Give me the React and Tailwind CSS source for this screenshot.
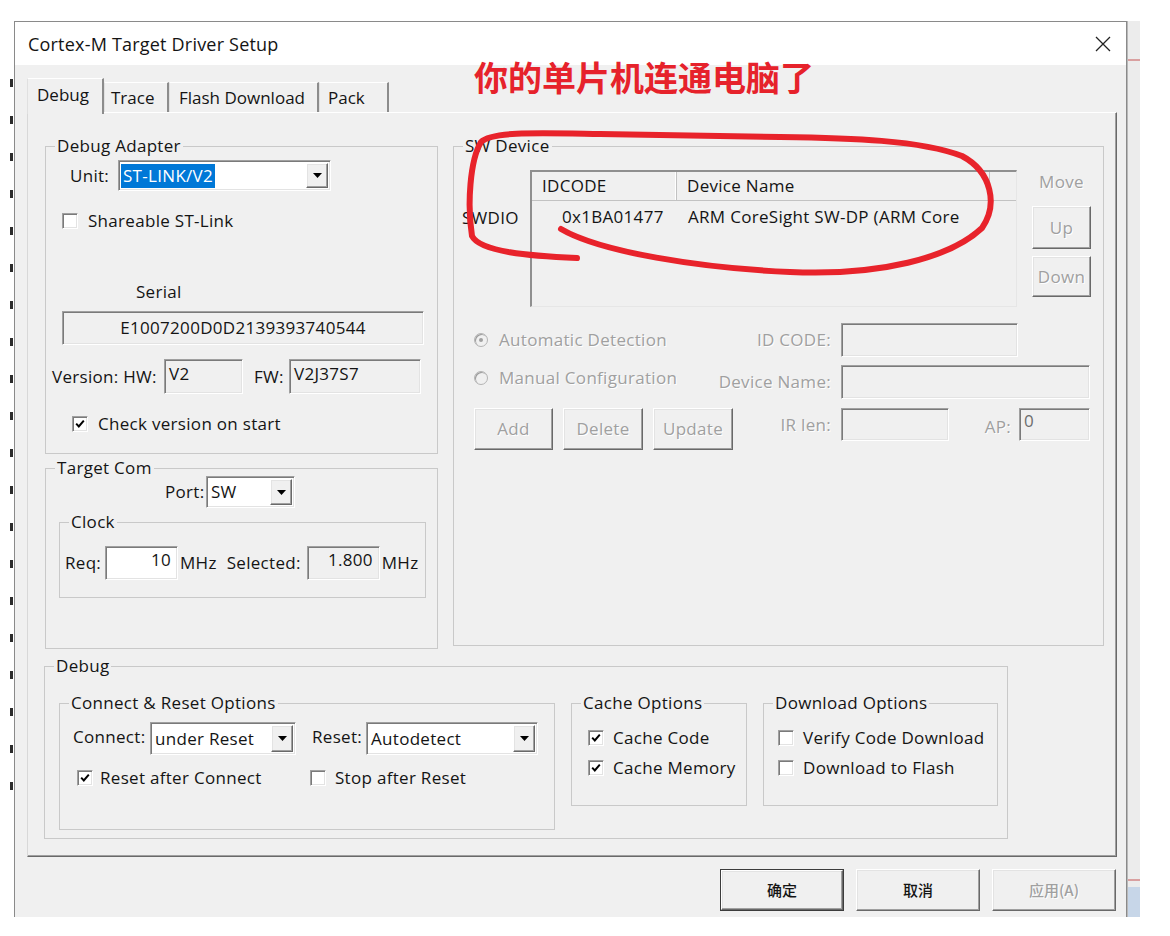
import React from 'react';

const sunken =
  'border border-t-[#a0a0a0] border-l-[#a0a0a0] border-r-white border-b-white shadow-[inset_1px_1px_0_#7a7a7a,inset_-1px_-1px_0_#e3e3e3]';
const raised =
  'border border-t-white border-l-white border-r-[#696969] border-b-[#696969] shadow-[inset_-1px_-1px_0_#a0a0a0,inset_1px_1px_0_#e3e3e3]';
const dis = 'text-[#a0a0a0] [text-shadow:1px_1px_0_#fff]';

function Group({ title, className = '', children }) {
  return (
    <fieldset className={`border border-[#c9c9c9] min-w-0 ${className}`}>
      <legend className="ml-[9px] px-[2px] leading-[22px]">{title}</legend>
      {children}
    </fieldset>
  );
}

function Box({ className = '', white, children }) {
  return (
    <div className={`${sunken} ${white ? 'bg-white' : 'bg-[#f0f0f0]'} flex items-center ${className}`}>
      {children}
    </div>
  );
}

function Select({ value, className = '', highlight }) {
  return (
    <div className={`${sunken} bg-white flex items-stretch p-[2px] ${className}`}>
      <div className="flex-1 flex items-center min-w-0 whitespace-nowrap">
        <span className={highlight ? 'bg-[#0078d7] text-white px-[2px] leading-[24px]' : 'px-[2px]'}>{value}</span>
      </div>
      <div className={`w-[22px] shrink-0 bg-[#f0f0f0] ${raised} flex items-center justify-center`}>
        <svg width="9" height="5" viewBox="0 0 9 5">
          <path d="M0 0h9L4.5 5z" fill="#000" />
        </svg>
      </div>
    </div>
  );
}

function Check({ checked }) {
  return (
    <span className={`w-[16px] h-[16px] bg-white ${sunken} flex items-center justify-center shrink-0`}>
      {checked && (
        <svg width="10" height="10" viewBox="0 0 10 10">
          <path d="M1.2 4.6l2.6 2.8L8.8 1.6" stroke="#000" strokeWidth="2" fill="none" />
        </svg>
      )}
    </span>
  );
}

function Radio({ on }) {
  return (
    <span className="w-[14px] h-[14px] rounded-full border border-[#b4b4b4] bg-[#f0f0f0] shadow-[inset_1px_1px_0_#9a9a9a] flex items-center justify-center shrink-0">
      {on && <span className="w-[4px] h-[4px] rounded-full bg-[#a0a0a0]" />}
    </span>
  );
}

function Btn({ children, className = '', disabled }) {
  return (
    <div className={`${raised} bg-[#f0f0f0] flex items-center justify-center ${disabled ? dis : ''} ${className}`}>
      {children}
    </div>
  );
}

function Tab({ label, active, className = '' }) {
  return (
    <div
      className={`border-t border-l border-t-white border-l-[#e0e0e0] border-r-2 border-r-[#8c8c8c] bg-[#f0f0f0] flex items-center text-[17px] tracking-normal ${
        active ? 'h-[36px] -mb-[2px] relative z-10 pb-[4px]' : 'h-[30px]'
      } ${className}`}
    >
      {label}
    </div>
  );
}

function DebugAdapter() {
  return (
    <Group title="Debug Adapter" className="h-[319px]">
      <div className="flex items-center mt-[3px] h-[31px]">
        <span className="ml-[24px] w-[48px]">Unit:</span>
        <Select className="w-[213px] h-[31px]" value="ST-LINK/V2" highlight />
      </div>
      <div className="flex items-center mt-[22px] ml-[16px] h-[16px]">
        <Check />
        <span className="ml-[10px]">Shareable ST-Link</span>
      </div>
      <div className="mt-[52px] ml-[90px]">Serial</div>
      <Box className="mt-[8px] ml-[16px] w-[362px] h-[34px] justify-center">E1007200D0D2139393740544</Box>
      <div className="flex items-center mt-[14px] h-[35px]">
        <span className="ml-[6px] w-[112px] whitespace-nowrap">Version: HW:</span>
        <Box className="w-[79px] h-[35px] pl-[4px] items-start pt-[3px]">V2</Box>
        <span className="ml-[11px] w-[35px]">FW:</span>
        <Box className="w-[132px] h-[35px] pl-[4px] items-start pt-[3px]">V2J37S7</Box>
      </div>
      <div className="flex items-center mt-[22px] ml-[26px] h-[16px]">
        <Check checked />
        <span className="ml-[10px]">Check version on start</span>
      </div>
    </Group>
  );
}

function TargetCom() {
  return (
    <Group title="Target Com" className="h-[192px] mt-[3px]">
      <div className="flex items-center -mt-[3px] h-[32px]">
        <span className="ml-[119px] w-[41px]">Port:</span>
        <Select className="w-[89px] h-[32px]" value="SW" />
      </div>
      <Group title="Clock" className="ml-[13px] mt-[3px] w-[367px] h-[87px]">
        <div className="flex items-center mt-[13px] h-[34px] whitespace-nowrap">
          <span className="ml-[5px] w-[40px]">Req:</span>
          <Box white className="w-[73px] h-[34px] justify-end pr-[6px] items-start pt-[2px]">10</Box>
          <span className="ml-[2px]">MHz</span>
          <span className="ml-[10px]">Selected:</span>
          <Box className="ml-[6px] w-[73px] h-[34px] justify-end pr-[6px] items-start pt-[2px]">1.800</Box>
          <span className="ml-[2px]">MHz</span>
        </div>
      </Group>
    </Group>
  );
}

function SWDevice() {
  return (
    <Group title="SW Device" className="w-[651px] h-[511px]">
      <div className="flex items-start mt-[13px]">
        <div className="w-[76px] pl-[8px] mt-[37px]">SWDIO</div>
        <div className="w-[487px] h-[137px] border-l-2 border-t-2 border-l-[#8f8f8f] border-t-[#8f8f8f] border-r border-b border-r-[#e6e6e6] border-b-[#e6e6e6] flex flex-col">
          <div className="flex h-[29px] border-b border-b-[#c2c2c2]">
            <div className="w-[145px] pl-[10px] flex items-center border-r border-r-[#c2c2c2] shadow-[inset_-1px_0_0_#fff]">IDCODE</div>
            <div className="w-[313px] pl-[10px] flex items-center border-r border-r-[#c2c2c2]">Device Name</div>
            <div className="flex-1" />
          </div>
          <div className="flex h-[32px] items-center whitespace-nowrap">
            <div className="w-[145px] pl-[30px] shrink-0">0x1BA01477</div>
            <div className="pl-[11px]">ARM CoreSight SW-DP (ARM Core</div>
          </div>
        </div>
        <div className="ml-[15px] w-[59px] flex flex-col">
          <div className={`mt-[1px] text-center ${dis}`}>Move</div>
          <Btn disabled className="mt-[13px] h-[43px]">Up</Btn>
          <Btn disabled className="mt-[7px] h-[41px]">Down</Btn>
        </div>
      </div>

      <div className="flex items-center mt-[16px] h-[34px] pl-[20px] whitespace-nowrap">
        <div className="w-[220px] flex items-center">
          <Radio on />
          <span className={`ml-[11px] ${dis}`}>Automatic Detection</span>
        </div>
        <span className={`w-[137px] text-right ${dis}`}>ID CODE:</span>
        <Box className="ml-[10px] w-[177px] h-[34px]" />
      </div>
      <div className="flex items-center mt-[8px] h-[34px] pl-[20px] whitespace-nowrap">
        <div className="w-[220px] flex items-center -mt-[8px]">
          <Radio />
          <span className={`ml-[11px] ${dis}`}>Manual Configuration</span>
        </div>
        <span className={`w-[137px] text-right ${dis}`}>Device Name:</span>
        <Box className="ml-[10px] w-[249px] h-[34px]" />
      </div>
      <div className="flex items-start mt-[9px] pl-[20px] whitespace-nowrap">
        <Btn disabled className="w-[79px] h-[42px]">Add</Btn>
        <Btn disabled className="ml-[10px] w-[80px] h-[42px]">Delete</Btn>
        <Btn disabled className="ml-[10px] w-[80px] h-[42px]">Update</Btn>
        <span className={`w-[98px] text-right mt-[6px] ${dis}`}>IR len:</span>
        <Box className="ml-[10px] w-[108px] h-[33px]" />
        <span className={`w-[62px] text-right mt-[8px] ${dis}`}>AP:</span>
        <Box className="ml-[8px] w-[71px] h-[33px] items-start pl-[4px] pt-[1px]">
          <span className="text-[#6d6d6d]">0</span>
        </Box>
      </div>
    </Group>
  );
}

function DebugGroup() {
  return (
    <Group title="Debug" className="mt-[6px] -ml-[1px] w-[964px] h-[184px]">
      <div className="flex items-start whitespace-nowrap">
        <Group title="Connect & Reset Options" className="ml-[14px] mt-[15px] w-[496px] h-[138px]">
          <div className="flex items-center mt-[8px] h-[33px]">
            <span className="ml-[13px] w-[77px] -mt-[4px]">Connect:</span>
            <Select className="w-[146px] h-[33px]" value="under Reset" />
            <span className="ml-[16px] w-[54px] -mt-[4px]">Reset:</span>
            <Select className="w-[172px] h-[33px]" value="Autodetect" />
          </div>
          <div className="flex items-center mt-[15px] h-[16px]">
            <div className="ml-[17px] w-[233px] flex items-center">
              <Check checked />
              <span className="ml-[7px]">Reset after Connect</span>
            </div>
            <Check />
            <span className="ml-[9px]">Stop after Reset</span>
          </div>
        </Group>
        <Group title="Cache Options" className="ml-[16px] mt-[15px] w-[176px] h-[114px]">
          <div className="flex items-center mt-[16px] ml-[16px] h-[16px]">
            <Check checked />
            <span className="ml-[9px]">Cache Code</span>
          </div>
          <div className="flex items-center mt-[14px] ml-[16px] h-[16px]">
            <Check checked />
            <span className="ml-[9px]">Cache Memory</span>
          </div>
        </Group>
        <Group title="Download Options" className="ml-[16px] mt-[15px] w-[235px] h-[114px]">
          <div className="flex items-center mt-[16px] ml-[14px] h-[16px]">
            <Check />
            <span className="ml-[9px]">Verify Code Download</span>
          </div>
          <div className="flex items-center mt-[14px] ml-[14px] h-[16px]">
            <Check />
            <span className="ml-[9px]">Download to Flash</span>
          </div>
        </Group>
      </div>
    </Group>
  );
}

function Window() {
  return (
    <div className="w-[1113px] h-[896px] border-t border-l border-r border-[#8a8a8a] bg-[#f0f0f0] flex flex-col">
      <div className="h-[43px] bg-white flex items-center justify-between pl-[13px] pr-[15px]">
        <span className="text-[18px] tracking-[0.2px]">Cortex-M Target Driver Setup</span>
        <svg width="16" height="16" viewBox="0 0 16 16">
          <path d="M1 1L15 15M15 1L1 15" stroke="#222" strokeWidth="1.3" />
        </svg>
      </div>
      <div className="flex flex-col pl-[12px] pr-[9px]">
        <div className="flex items-end h-[34px] mt-[13px] relative z-10">
          <Tab label="Debug" active className="w-[77px] pl-[9px]" />
          <Tab label="Trace" className="w-[65px] pl-[6px]" />
          <Tab label="Flash Download" className="w-[150px] pl-[9px]" />
          <Tab label="Pack" className="w-[70px] pl-[8px]" />
        </div>
        <div className="h-[745px] border border-t-white border-l-[#d8d8d8] border-r-[#696969] border-b-[#696969] shadow-[inset_-1px_-1px_0_#a0a0a0] pt-[22px] pl-[17px]">
          <div className="flex gap-[15px]">
            <div className="w-[393px] flex flex-col">
              <DebugAdapter />
              <TargetCom />
            </div>
            <SWDevice />
          </div>
          <DebugGroup />
        </div>
        <div className="flex justify-end gap-[12px] mt-[12px] pr-[1px] font-['Noto_Sans_CJK_SC',sans-serif] text-[15px] font-medium tracking-normal">
          <div className="w-[124px] h-[42px] border border-[#3c3c3c] flex">
            <Btn className="flex-1">确定</Btn>
          </div>
          <Btn className="w-[124px] h-[42px]">取消</Btn>
          <Btn disabled className="w-[124px] h-[42px]">应用(A)</Btn>
        </div>
      </div>
    </div>
  );
}

function LeftEdge() {
  return (
    <div className="w-[14px] h-[896px] flex justify-end pr-[1px]">
      <div className="w-[3px] mt-[58px] h-[740px] bg-[repeating-linear-gradient(to_bottom,#2b2b2b_0_8px,transparent_8px_37px)]" />
    </div>
  );
}

function RightEdge() {
  return (
    <div className="w-[13px] h-[896px] bg-[#ececec] border-l border-l-[#b8b8b8] flex flex-col">
      <div className="h-[38px]" />
      <div className="h-[2px] bg-[#d9a0a0]" />
      <div className="flex-1" />
      <div className="h-[2px] bg-[#d9a0a0]" />
      <div className="h-[6px]" />
      <div className="h-[30px] bg-[#c7d6e8]" />
    </div>
  );
}

function Annotation() {
  return (
    <>
      <div className="absolute left-[474px] top-[56px] text-[34px] leading-[42px] font-bold text-[#e6222b] font-['Noto_Sans_CJK_SC',sans-serif] tracking-normal">
        你的单片机连通电脑了
      </div>
      <svg className="absolute left-0 top-0 pointer-events-none" width="1170" height="936">
        <path
          d="M561 229 C600 252 700 268 790 272 C880 276 950 258 982 228 C998 205 992 172 962 156 C920 140 850 138 780 137 L600 134 C540 133 492 131 481 142 C470 160 467 205 472 236 C480 252 530 256 577 258"
          stroke="#e8232b"
          strokeWidth="6"
          fill="none"
          strokeLinecap="round"
          strokeLinejoin="round"
        />
      </svg>
    </>
  );
}

export default function App() {
  return (
    <div className="relative w-[1170px] h-[936px] bg-white font-['Open_Sans',sans-serif] text-[17px] tracking-[0.3px] leading-[22px] text-[#141414] overflow-hidden">
      <div className="flex pt-[21px]">
        <LeftEdge />
        <Window />
        <RightEdge />
      </div>
      <Annotation />
    </div>
  );
}
